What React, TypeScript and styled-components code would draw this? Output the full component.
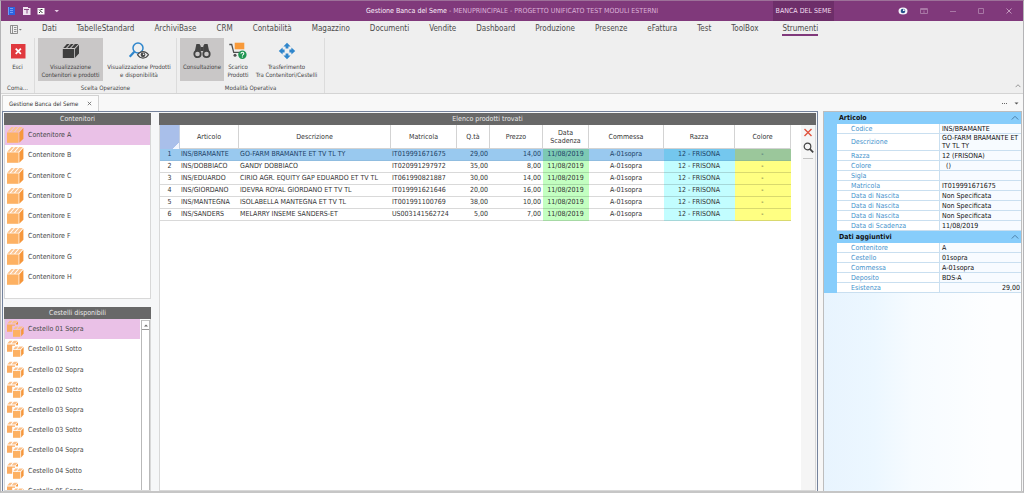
import React, { useState } from "react";
import styled, { createGlobalStyle, css } from "styled-components";

const GlobalStyle = createGlobalStyle`
  *, *::before, *::after { box-sizing: border-box; }
  html, body { margin: 0; }
  body {
    font-family: "DejaVu Sans Condensed", "DejaVu Sans", "Noto Sans", sans-serif;
    font-size: 7px;
    line-height: 8px;
    color: #333;
    background: #f7f7f7;
  }
  button { font: inherit; color: inherit; border: 0; padding: 0; background: none; cursor: pointer; }
  ul { list-style: none; margin: 0; padding: 0; }
  h1, h2 { font: inherit; margin: 0; }
  svg { display: block; flex: none; }
`;

/* ---------- window frame ---------- */

const Window = styled.div`
  height: 100vh;
  display: flex;
  flex-direction: column;
  border: 1px solid #b4b4b6;
  border-top-color: #9d7199;
  border-bottom: 2px solid #c6c6c6;
  overflow: hidden;
`;

const TitleBar = styled.header`
  display: grid;
  grid-template-columns: 1fr auto 1fr;
  align-items: stretch;
  height: 20px;
  flex: none;
  background: #80397b;
  color: #dcb2d9;
`;

const QuickAccess = styled.div`
  display: flex;
  align-items: center;
  gap: 6px;
  padding-left: 6px;
`;

const Title = styled.h1`
  align-self: center;
  white-space: nowrap;
  strong { font-weight: 400; color: #fbeefa; }
`;

const TitleRight = styled.div`
  display: flex;
  justify-content: flex-end;
`;

const ContextTab = styled.div`
  display: flex;
  align-items: center;
  justify-content: center;
  width: 61px;
  margin-right: 58px;
  background: #6d2e69;
  color: #f3def2;
  white-space: nowrap;
`;

const FrameButtons = styled.div<{ $size: number }>`
  display: grid;
  grid-auto-flow: column;
  grid-auto-columns: ${(p) => p.$size}px;
  & + & { margin-left: 5px; }
`;

const FrameButton = styled.button`
  display: flex;
  align-items: center;
  justify-content: center;
`;

/* ---------- ribbon ---------- */

const MenuBar = styled.nav`
  display: flex;
  align-items: center;
  gap: 20px;
  height: 17px;
  flex: none;
  padding: 0 9px;
  background: #efefef;
`;

const MenuTab = styled.button<{ $active?: boolean }>`
  height: 13px;
  font-size: 8px;
  line-height: 10px;
  color: #4c4c4c;
  border-bottom: 2px solid ${(p) => (p.$active ? "#80397b" : "transparent")};
  white-space: nowrap;
  &:last-child { margin-left: 4px; }
`;

const Ribbon = styled.div`
  display: flex;
  height: 56px;
  flex: none;
  font-size: 6px;
  background: #efefef;
  border-bottom: 1px solid #d4d4d4;
`;

const RibbonGroup = styled.section`
  display: flex;
  flex-direction: column;
  justify-content: space-between;
  padding: 0 3px 1px 3px;
  border-right: 1px solid #dcdcdc;
`;

const RibbonItems = styled.div`
  display: flex;
  gap: 2px;
`;

const RibbonCaption = styled.div`
  text-align: center;
  color: #444;
  white-space: nowrap;
`;

const RibbonButton = styled.button<{ $w: number; $active?: boolean }>`
  display: flex;
  flex-direction: column;
  align-items: center;
  gap: 3px;
  width: ${(p) => p.$w}px;
  height: 43px;
  padding-top: 4px;
  color: #444;
  white-space: nowrap;
  background: ${(p) => (p.$active ? "#c9c7c7" : "transparent")};
`;

const RibbonLabel = styled.span`
  display: flex;
  flex-direction: column;
  align-items: center;
`;

const RibbonToggle = styled.button`
  align-self: flex-end;
  margin-left: auto;
  padding: 4px 2px;
`;

/* ---------- document tabs ---------- */

const DocumentTabs = styled.div`
  display: flex;
  align-items: stretch;
  justify-content: space-between;
  height: 17px;
  flex: none;
  padding: 1px 4px 0 1px;
  background: #f8f8f8;
`;

const DocumentTab = styled.div`
  display: flex;
  align-items: center;
  gap: 9px;
  padding: 0 6px;
  font-size: 6px;
  background: #fbfbfb;
  border: 1px solid #d2d2d2;
  border-bottom: 0;
  color: #333;
`;

const TabActions = styled.div`
  display: flex;
  align-items: center;
  gap: 7px;
`;

const Workspace = styled.main`
  display: flex;
  flex: 1;
  min-height: 0;
  gap: 5px;
  padding-right: 1px;
`;

const DocumentBody = styled.div`
  display: grid;
  grid-template-columns: 147px 1fr;
  gap: 8px;
  flex: 1;
  min-width: 0;
  margin-left: 1px;
  padding: 1px 1px 0 1px;
  border: 1px solid #74829c;
  border-bottom: 0;
  background: #f6f7f8;
`;

/* ---------- panels ---------- */

const SideColumn = styled.aside`
  display: flex;
  flex-direction: column;
  gap: 8px;
  min-height: 0;
`;

const Panel = styled.section<{ $fill?: boolean }>`
  display: flex;
  flex-direction: column;
  min-height: 0;
  min-width: 0;
  background: #fff;
  border: 1px solid #d8d8d8;
  border-top: 0;
  flex: ${(p) => (p.$fill ? "1" : "none")};
`;

const PanelTitle = styled.h2`
  height: 12px;
  flex: none;
  margin: 0 -1px;
  line-height: 12px;
  text-align: center;
  background: #686868;
  color: #e8e8e8;
`;

const ListArea = styled.div<{ $gap?: boolean }>`
  display: flex;
  flex: 1;
  min-height: 0;
  overflow: hidden;
  padding-bottom: ${(p) => (p.$gap ? 11 : 0)}px;
`;

const ItemList = styled.ul<{ $rows: number; $height: number }>`
  display: grid;
  flex: 1;
  height: ${(p) => p.$height}px;
  grid-template-rows: repeat(${(p) => p.$rows}, 1fr);
`;

const ItemButton = styled.button<{ $active?: boolean }>`
  display: flex;
  align-items: center;
  gap: 4px;
  width: 100%;
  height: 100%;
  padding-left: 1px;
  color: #484848;
  background: ${(p) => (p.$active ? "#eac1e7" : "transparent")};
`;

const ScrollTrack = styled.div`
  width: 9px;
  flex: none;
  margin: 1px 0 0 1px;
  border-left: 1px solid #b9b9b9;
  border-right: 1px solid #b9b9b9;
`;

const ScrollUp = styled.button`
  display: flex;
  align-items: center;
  justify-content: center;
  width: 100%;
  height: 10px;
  border-top: 1px solid #c4c4c4;
  border-bottom: 1px solid #9a9a9a;
`;

/* ---------- product grid ---------- */

const ProductArea = styled.div`
  display: flex;
  justify-content: space-between;
  flex: 1;
  min-height: 0;
`;

const ProductTable = styled.table`
  table-layout: fixed;
  border-collapse: separate;
  border-spacing: 0;
  align-self: flex-start;
  width: 631px;
`;

const HeadCell = styled.th`
  height: 24px;
  padding: 0 2px;
  font-weight: 400;
  background: #fff;
  border-right: 1px solid #d3d3d3;
  border-bottom: 1px solid #d3d3d3;
`;

const CornerCell = styled.td`
  background: linear-gradient(135deg, #a9bfea 0 86%, #f2f6fd 86%);
  border-right: 1px solid #c4cfe2;
`;

type Tone = "green" | "cyan" | "yellow";
const tones: Record<Tone, [string, string]> = {
  green: ["#c3ffc1", "#7cc9b4"],
  cyan: ["#c2fdff", "#74c7ee"],
  yellow: ["#ffff82", "#9bc79b"],
};

const Row = styled.tr<{ $active?: boolean }>`
  cursor: pointer;
  ${(p) => p.$active && css`background: #99c9ef; color: #1c3f66;`}
`;

const Cell = styled.td<{ $align?: "left" | "center" | "right"; $tone?: Tone; $active?: boolean }>`
  height: 12px;
  padding: 0 2px 0 1px;
  line-height: 11px;
  text-align: ${(p) => p.$align ?? "left"};
  white-space: nowrap;
  overflow: hidden;
  border-bottom: 1px solid rgba(0, 0, 0, ${(p) => (p.$active ? 0.06 : 0.15)});
  ${(p) => p.$tone && css`background: ${tones[p.$tone][p.$active ? 1 : 0]};`}
`;

const SideTools = styled.div`
  display: flex;
  flex-direction: column;
  align-items: center;
  gap: 5px;
  width: 14px;
  padding-top: 3px;
  background: #f5f5f5;
`;

const ToolRule = styled.hr`
  width: 10px;
  margin: 0;
  border: 0;
  border-top: 1px solid #c3c3c3;
`;

/* ---------- property grid ---------- */

const PropertyPanel = styled.aside`
  width: 199px;
  flex: none;
  border: 1px solid #bdbdbd;
  border-bottom: 0;
  background: linear-gradient(90deg, #e8f4fe, #ecf7ff 25%, #f6fbff 45%, #fdfeff 85%);
`;

const PropertyTable = styled.table`
  width: 100%;
  table-layout: fixed;
  border-collapse: separate;
  border-spacing: 0;
`;

const GroupHead = styled.th`
  height: 12px;
  padding: 0 0 0 15px;
  text-align: left;
  line-height: 12px;
  color: #111;
  background: #87cdfb;
`;

const GroupToggle = styled.button`
  display: flex;
  align-items: center;
  justify-content: space-between;
  width: 100%;
  padding-right: 2px;
`;

const Gutter = styled.td`
  padding: 0;
  background: #87cdfb;
`;

const PropName = styled.th`
  height: 10px;
  padding: 0 0 0 14px;
  text-align: left;
  font-weight: 400;
  color: #3f92cc;
  background: #fff;
  border-bottom: 1px solid #c9dff0;
  border-right: 1px solid #c9dff0;
`;

const PropValue = styled.td<{ $right?: boolean }>`
  padding: 0 1px 0 2px;
  color: #111;
  background: #f7fbff;
  border-bottom: 1px solid #c9dff0;
  text-align: ${(p) => (p.$right ? "right" : "left")};
`;

/* ---------- icons ---------- */

const BoxIcon = () => (
  <svg width="18" height="18" viewBox="0 0 18 18">
    <path d="M1 6.400h11.600v10.400H1z" fill="#fdb163" />
    <path d="M13.300 6.400 17.400 1.800v11L13.300 16.800z" fill="#f6973c" />
    <path d="M1.200 5.700 5.400 1h2.400L3.800 5.700zM5 5.700 9 1h3L8 5.700zM9.200 5.700 13.200 1h3.600L12.700 5.700z" fill="#fcc48f" />
  </svg>
);

const BoxesIcon = () => (
  <svg width="18" height="18" viewBox="0 0 18 18">
    <path d="M1 4.400h8v1.400H6.200v6H1z" fill="#fbac62" />
    <path d="M1.200 3.600 3.600.8h3L4.400 3.600zM5.500 3.600 7.800.8h3.800L9.200 3.600z" fill="#fbc08a" />
    <path d="M9.800 3.800 12 1.400v3.200H9.800z" fill="#f6973c" />
    <path d="M7 10h7.400v6.800H7z" fill="#fdb163" />
    <path d="M15.100 9.800 17.600 7v6.600l-2.500 3z" fill="#f6973c" />
    <path d="M7.200 9.200 9.300 6.400h3L10.100 9.200zM11.100 9.200 13.300 6.400h3.800L14.600 9.200z" fill="#fbc08a" />
  </svg>
);

const DarkBoxIcon = () => (
  <svg width="18" height="18" viewBox="0 0 18 18">
    <path d="M.8 7h11.400v9H.8zM13 7l4-4.200v8.700L13 15.800z" fill="#3e3e3e" />
    <path d="M1.200 6 4.900 2h2.700L4 6zM5.200 6 8.900 2h2.700L8 6zM9.200 6 12.900 2h3.500l-3.800 4z" fill="#3e3e3e" />
  </svg>
);

const ExitIcon = () => (
  <svg width="18" height="18" viewBox="0 0 18 18">
    <path d="M2 2h14.500v14.500H2z" fill="#e0393e" />
    <path d="m6.700 6.700 5.200 5.200m0-5.200-5.200 5.200" stroke="#fff" strokeWidth="1.700" />
  </svg>
);

const SearchEyeIcon = () => (
  <svg width="22" height="18" viewBox="0 0 22 18">
    <circle cx="10" cy="6" r="5" fill="none" stroke="#2f86cc" strokeWidth="1.500" />
    <path d="m6.300 9.800-4.600 5" stroke="#2f86cc" strokeWidth="2.200" />
    <path d="M9.500 12.800c2.700-4.300 8.300-4.300 11 0-2.700 4.300-8.300 4.300-11 0z" fill="#efefef" stroke="#4b4b4b" strokeWidth="1.200" />
    <circle cx="15" cy="12.800" r="2.400" fill="#4b4b4b" />
    <circle cx="15.600" cy="12.200" r=".8" fill="#fff" />
  </svg>
);

const BinocularsIcon = () => (
  <svg width="18" height="18" viewBox="0 0 18 18">
    <path d="M3.400 2h3.100l1.200 2v5H1.900zM11.500 2h3.100l1.500 7h-5.800V4z" fill="#444" />
    <path d="M7.300 5h3.400v4H7.300z" fill="#444" />
    <circle cx="4.500" cy="12" r="3.200" fill="#c9c7c7" stroke="#444" strokeWidth="1.800" />
    <circle cx="13.500" cy="12" r="3.200" fill="#c9c7c7" stroke="#444" strokeWidth="1.800" />
  </svg>
);

const CartIcon = () => (
  <svg width="18" height="18" viewBox="0 0 18 18">
    <path d="M5.700.7h9.600v6.600H5.700z" fill="#f89a3a" />
    <path d="M.3 2.500h2.400l2 7.800h8" fill="none" stroke="#505050" strokeWidth="1.300" />
    <circle cx="6" cy="13.300" r="1.500" fill="#505050" />
    <circle cx="13.400" cy="12.800" r="4.200" fill="#219653" />
    <path d="M12 11.700c0-2 2.900-1.800 2.800-.1 0 1-1.400 1-1.400 2.100m0 .8v1" fill="none" stroke="#fff" strokeWidth="1.100" />
  </svg>
);

const MoveIcon = () => (
  <svg width="18" height="18" viewBox="0 0 18 18" fill="#2f86cc">
    {[0, 90, 180, 270].map((a) => (
      <path key={a} d="M9 .8 12.600 4.600H10.400V6.600H7.600V4.600H5.400z" transform={`rotate(${a} 9 9)`} />
    ))}
  </svg>
);

const Chevron = ({ color = "#777", w = 8 }: { color?: string; w?: number }) => (
  <svg width={w} height="6" viewBox="0 0 8 6">
    <path d="M.8 4.500 4 1.300l3.200 3.200" fill="none" stroke={color} strokeWidth="1" />
  </svg>
);

/* ---------- data ---------- */

const menu = ["Dati", "TabelleStandard", "ArchiviBase", "CRM", "Contabilità", "Magazzino", "Documenti", "Vendite", "Dashboard", "Produzione", "Presenze", "eFattura", "Test", "ToolBox", "Strumenti"];
const containers = ["A", "B", "C", "D", "E", "F", "G", "H"].map((l) => `Contenitore ${l}`);
const baskets = ["01 Sopra", "01 Sotto", "02 Sopra", "02 Sotto", "03 Sopra", "03 Sotto", "04 Sopra", "04 Sotto", "05 Sopra"].map((l) => `Cestello ${l}`);

const columns = [
  { label: ["Articolo"], w: 59 },
  { label: ["Descrizione"], w: 152 },
  { label: ["Matricola"], w: 66 },
  { label: ["Q.tà"], w: 33 },
  { label: ["Prezzo"], w: 53 },
  { label: ["Data", "Scadenza"], w: 46 },
  { label: ["Commessa"], w: 75 },
  { label: ["Razza"], w: 71 },
  { label: ["Colore"], w: 56 },
];

const products = [
  ["INS/BRAMANTE", "GO-FARM BRAMANTE ET TV TL TY", "IT019991671675", "29,00", "14,00"],
  ["INS/DOBBIACO", "GANDY DOBBIACO", "IT020991297972", "35,00", "8,00"],
  ["INS/EDUARDO", "CIRIO AGR. EQUITY GAP EDUARDO ET TV TL", "IT061990821887", "30,00", "14,00"],
  ["INS/GIORDANO", "IDEVRA ROYAL GIORDANO ET TV TL", "IT019991621646", "20,00", "16,00"],
  ["INS/MANTEGNA", "ISOLABELLA MANTEGNA ET TV TL", "IT001991100769", "38,00", "10,00"],
  ["INS/SANDERS", "MELARRY INSEME SANDERS-ET", "US003141562724", "5,00", "7,00"],
];

const properties: { title: string; rows: [string, string][] }[] = [
  {
    title: "Articolo",
    rows: [
      ["Codice", "INS/BRAMANTE"],
      ["Descrizione", "GO-FARM BRAMANTE ET TV TL TY"],
      ["Razza", "12 (FRISONA)"],
      ["Colore", "\u00a0 ()"],
      ["Sigla", ""],
      ["Matricola", "IT019991671675"],
      ["Data di Nascita", "Non Specificata"],
      ["Data di Nascita", "Non Specificata"],
      ["Data di Nascita", "Non Specificata"],
      ["Data di Scadenza", "11/08/2019"],
    ],
  },
  {
    title: "Dati aggiuntivi",
    rows: [
      ["Contenitore", "A"],
      ["Cestello", "01sopra"],
      ["Commessa", "A-01sopra"],
      ["Deposito", "BDS-A"],
      ["Esistenza", "29,00"],
    ],
  },
];

/* ---------- parts ---------- */

type ActionProps = { w: number; icon: React.ReactNode; lines: string[]; active?: boolean };
const Action = ({ w, icon, lines, active }: ActionProps) => (
  <RibbonButton type="button" $w={w} $active={active} aria-pressed={active}>
    {icon}
    <RibbonLabel>{lines.map((l) => <span key={l}>{l}</span>)}</RibbonLabel>
  </RibbonButton>
);

type ListProps = { items: string[]; icon: React.ReactNode; height: number };
const SelectList = ({ items, icon, height }: ListProps) => {
  const [current, setCurrent] = useState(0);
  return (
    <ItemList $rows={items.length} $height={height}>
      {items.map((item, i) => (
        <li key={item}>
          <ItemButton type="button" $active={i === current} onClick={() => setCurrent(i)}>
            {icon}
            {item}
          </ItemButton>
        </li>
      ))}
    </ItemList>
  );
};

export default function App() {
  const [selected, setSelected] = useState(0);
  return (
    <Window>
      <GlobalStyle />
      <TitleBar>
        <QuickAccess>
          <svg width="9" height="10" viewBox="0 0 9 10">
            <path d="M1 1h7v8H1z" fill="#2c63e0" />
            <path d="M3 2.500h3M3 4.500h3M3 6.500h3M1.500 1v8" stroke="#8fb4ff" strokeWidth=".7" />
          </svg>
          <svg width="9" height="10" viewBox="0 0 9 10">
            <path d="M1 1h5v1h2.500v7H1z" fill="#f0e4f0" />
            <path d="M2 3.500h5M5 4v3.500" stroke="#80397b" strokeWidth=".9" />
          </svg>
          <svg width="8" height="8" viewBox="0 0 8 8">
            <path d="M.5 1h7v6.500h-7z" fill="#fff" />
            <path d="m2 2.500 3.500 3.500M5.500 2.500h-2M3.500 4.500 2 6" stroke="#333" strokeWidth="1" fill="none" />
          </svg>
          <svg width="12" height="6" viewBox="0 0 12 6">
            <path d="M3.500 2h4.500L5.800 4.300z" fill="#e7cde5" />
          </svg>
        </QuickAccess>
        <Title><strong>Gestione Banca del Seme</strong> - MENUPRINCIPALE - PROGETTO UNIFICATO TEST MODULI ESTERNI</Title>
        <TitleRight>
          <ContextTab>BANCA DEL SEME</ContextTab>
          <FrameButtons $size={21}>
            <FrameButton type="button" aria-label="Vista">
              <svg width="10" height="8" viewBox="0 0 10 8">
                <ellipse cx="5" cy="4" rx="4.500" ry="3.500" fill="#f4f4fa" />
                <circle cx="5" cy="4" r="2.300" fill="#27518c" />
                <circle cx="5.800" cy="3.200" r=".9" fill="#fff" />
              </svg>
            </FrameButton>
            <FrameButton type="button" aria-label="Opzioni barra">
              <svg width="8" height="8" viewBox="0 0 8 8" fill="none" stroke="#a877a5">
                <path d="M.5 1.500h7v5h-7zM.5 2.500h7M4 6V3.500" />
              </svg>
            </FrameButton>
          </FrameButtons>
          <FrameButtons $size={28}>
            <FrameButton type="button" aria-label="Riduci a icona">
              <svg width="8" height="8" viewBox="0 0 8 8"><path d="M1 4.500h6" stroke="#a877a5" /></svg>
            </FrameButton>
            <FrameButton type="button" aria-label="Ingrandisci">
              <svg width="8" height="8" viewBox="0 0 8 8"><path d="M1.500 1.500h5v5h-5z" fill="none" stroke="#a877a5" /></svg>
            </FrameButton>
            <FrameButton type="button" aria-label="Chiudi">
              <svg width="8" height="8" viewBox="0 0 8 8"><path d="m1.500 1.500 5 5m0-5-5 5" stroke="#c9a3c6" strokeWidth=".9" /></svg>
            </FrameButton>
          </FrameButtons>
        </TitleRight>
      </TitleBar>

      <MenuBar>
        <button type="button" aria-label="File">
          <svg width="12" height="9" viewBox="0 0 12 9">
            <path d="M.5.5h7v8h-7zM2.500.5v8M4 2.500h2.500M4 4.500h2.500M4 6.500h2.500" fill="none" stroke="#777" strokeWidth=".8" />
            <path d="M8.800 4h3l-1.500 1.500z" fill="#777" />
          </svg>
        </button>
        {menu.map((m) => <MenuTab key={m} type="button" $active={m === "Strumenti"}>{m}</MenuTab>)}
      </MenuBar>

      <Ribbon>
        <RibbonGroup>
          <RibbonItems><Action w={27} icon={<ExitIcon />} lines={["Esci"]} /></RibbonItems>
          <RibbonCaption>Coma...</RibbonCaption>
        </RibbonGroup>
        <RibbonGroup>
          <RibbonItems>
            <Action w={65} active icon={<DarkBoxIcon />} lines={["Visualizzazione", "Contenitori e prodotti"]} />
            <Action w={68} icon={<SearchEyeIcon />} lines={["Visualizzazione Prodotti", "e disponibilità"]} />
          </RibbonItems>
          <RibbonCaption>Scelta Operazione</RibbonCaption>
        </RibbonGroup>
        <RibbonGroup>
          <RibbonItems>
            <Action w={44} active icon={<BinocularsIcon />} lines={["Consultazione"]} />
            <Action w={24} icon={<CartIcon />} lines={["Scarico", "Prodotti"]} />
            <Action w={69} icon={<MoveIcon />} lines={["Trasferimento", "Tra Contenitori/Cestelli"]} />
          </RibbonItems>
          <RibbonCaption>Modalità Operativa</RibbonCaption>
        </RibbonGroup>
        <RibbonToggle type="button" aria-label="Comprimi barra multifunzione"><Chevron w={6} /></RibbonToggle>
      </Ribbon>

      <DocumentTabs>
        <DocumentTab>
          Gestione Banca del Seme
          <button type="button" aria-label="Chiudi scheda">
            <svg width="5" height="5" viewBox="0 0 5 5"><path d="m.8.8 3.400 3.400m0-3.400L.8 4.200" stroke="#666" strokeWidth=".8" /></svg>
          </button>
        </DocumentTab>
        <TabActions>
          <button type="button" aria-label="Altre schede">
            <svg width="5" height="3" viewBox="0 0 5 3" fill="#666"><path d="M0 1h1v1H0zM2 1h1v1H2zM4 1h1v1H4z" /></svg>
          </button>
          <button type="button" aria-label="Elenco schede">
            <svg width="5" height="3" viewBox="0 0 5 3"><path d="M.5.500h4L2.500 2.500z" fill="#555" /></svg>
          </button>
        </TabActions>
      </DocumentTabs>

      <Workspace>
        <DocumentBody>
          <SideColumn>
            <Panel>
              <PanelTitle>Contenitori</PanelTitle>
              <ListArea $gap><SelectList items={containers} icon={<BoxIcon />} height={162} /></ListArea>
            </Panel>
            <Panel $fill>
              <PanelTitle>Cestelli disponibili</PanelTitle>
              <ListArea>
                <SelectList items={baskets} icon={<BoxesIcon />} height={182} />
                <ScrollTrack>
                  <ScrollUp type="button" aria-label="Scorri in alto">
                    <svg width="4" height="3" viewBox="0 0 4 3"><path d="M0 2.500h4L2 .5z" fill="#666" /></svg>
                  </ScrollUp>
                </ScrollTrack>
              </ListArea>
            </Panel>
          </SideColumn>

          <Panel $fill>
            <PanelTitle>Elenco prodotti trovati</PanelTitle>
            <ProductArea>
              <ProductTable>
                <colgroup>
                  <col style={{ width: 20 }} />
                  {columns.map((c) => <col key={c.label[0]} style={{ width: c.w }} />)}
                </colgroup>
                <thead>
                  <tr>
                    <CornerCell />
                    {columns.map((c) => (
                      <HeadCell key={c.label[0]} scope="col">
                        {c.label.map((l) => <div key={l}>{l}</div>)}
                      </HeadCell>
                    ))}
                  </tr>
                </thead>
                <tbody>
                  {products.map(([code, name, serial, qty, price], i) => {
                    const on = i === selected;
                    return (
                      <Row key={code} $active={on} onClick={() => setSelected(i)}>
                        <Cell $align="center" $active={on}>{i + 1}</Cell>
                        <Cell $active={on}>{code}</Cell>
                        <Cell $active={on}>{name}</Cell>
                        <Cell $active={on}>{serial}</Cell>
                        <Cell $align="right" $active={on}>{qty}</Cell>
                        <Cell $align="right" $active={on}>{price}</Cell>
                        <Cell $align="center" $tone="green" $active={on}>11/08/2019</Cell>
                        <Cell $align="center" $active={on}>A-01sopra</Cell>
                        <Cell $align="center" $tone="cyan" $active={on}>12 - FRISONA</Cell>
                        <Cell $align="center" $tone="yellow" $active={on}>-</Cell>
                      </Row>
                    );
                  })}
                </tbody>
              </ProductTable>
              <SideTools>
                <button type="button" aria-label="Elimina">
                  <svg width="10" height="9" viewBox="0 0 10 9"><path d="m1.500 1 7 7m0-7-7 7" stroke="#e0533d" strokeWidth="1.400" /></svg>
                </button>
                <button type="button" aria-label="Cerca">
                  <svg width="11" height="11" viewBox="0 0 11 11" fill="none" stroke="#444">
                    <circle cx="4.500" cy="4.500" r="3.300" strokeWidth="1.200" />
                    <path d="m6.800 6.800 3.400 3.600" strokeWidth="1.700" />
                  </svg>
                </button>
                <ToolRule />
              </SideTools>
            </ProductArea>
          </Panel>
        </DocumentBody>

        <PropertyPanel>
          <PropertyTable>
            <colgroup>
              <col style={{ width: 13 }} />
              <col style={{ width: 103 }} />
              <col />
            </colgroup>
            {properties.map((group) => (
              <tbody key={group.title}>
                <tr>
                  <GroupHead colSpan={3} scope="colgroup">
                    <GroupToggle type="button">{group.title}<Chevron color="#4d7fa8" /></GroupToggle>
                  </GroupHead>
                </tr>
                {group.rows.map(([name, value], i) => (
                  <tr key={i}>
                    <Gutter />
                    <PropName scope="row">{name}</PropName>
                    <PropValue $right={name === "Esistenza"}>{value}</PropValue>
                  </tr>
                ))}
              </tbody>
            ))}
          </PropertyTable>
        </PropertyPanel>
      </Workspace>
    </Window>
  );
}
